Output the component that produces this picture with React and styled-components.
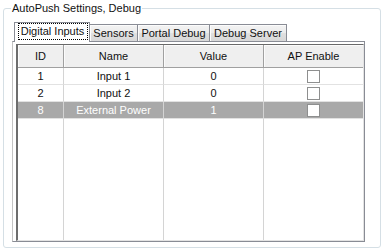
import React from "react";
import styled, { createGlobalStyle } from "styled-components";

const Global = createGlobalStyle`
  html, body { margin: 0; padding: 0; background: #ffffff; }
  body { font-family: "Liberation Sans", Arial, sans-serif; font-size: 11px; color: #111; }
  * { box-sizing: border-box; }
`;

const Page = styled.div`
  width: 392px;
  height: 249px;
  padding: 8px 0 0 3px;
`;

const GroupBox = styled.div`
  position: relative;
  width: 378px;
  height: 240px;
  border: 1px solid #d5dfe5;
  border-radius: 3px;
  padding: 13px 15px 5px 8px;
`;

const GroupTitle = styled.div`
  position: absolute;
  top: -7px;
  left: 7px;
  padding: 0 1px;
  line-height: 13px;
  background: #ffffff;
  color: #111;
  white-space: nowrap;
`;

const TabControl = styled.div`
  display: flex;
  flex-direction: column;
  width: 353px;
  height: 220px;
`;

const TabStrip = styled.div`
  display: flex;
  align-items: flex-end;
  height: 19px;
  padding-left: 2px;
  position: relative;
  z-index: 1;
`;

const Tab = styled.div`
  display: flex;
  align-items: center;
  justify-content: center;
  white-space: nowrap;
  border: 1px solid #898c95;
  border-bottom: none;
  width: ${(p) => p.$w}px;
  margin-left: ${(p) => (p.$first ? 0 : -1)}px;
  height: ${(p) => (p.$active ? 20 : 17)}px;
  margin-bottom: ${(p) => (p.$active ? -1 : 0)}px;
  padding-bottom: ${(p) => (p.$active ? 2 : 0)}px;
  background: ${(p) =>
    p.$active ? "#ffffff" : "linear-gradient(#f3f3f3, #ececec 50%, #e0e0e0 51%, #d8d8d8)"};
  box-shadow: ${(p) => (p.$active ? "none" : "inset 1px 1px 0 #fcfcfc")};
  position: relative;
  z-index: ${(p) => (p.$active ? 2 : 1)};
`;

const FocusLabel = styled.span`
  display: flex;
  align-items: center;
  justify-content: center;
  width: 70px;
  height: 17px;
  margin-left: 1px;
  border: 1px dotted #000;
  line-height: 13px;
`;

const TabPanel = styled.div`
  flex: 1;
  border: 1px solid #898c95;
  border-left-color: #c4c4c4;
  padding: 2px 0 0 3px;
  background: #ffffff;
  display: flex;
`;

const Grid = styled.div`
  flex: 1;
  display: grid;
  grid-template-columns: 46px 100px 100px 1fr;
  grid-template-rows: 23px 17px 17px 17px 1fr;
  border-top: 1px solid #696969;
  border-left: 2px solid #6d6d6d;
  border-right: 1px solid #e3e3e3;
  border-bottom: 1px solid #e3e3e3;
  background: #ffffff;
`;

const HeaderCell = styled.div`
  display: flex;
  align-items: center;
  justify-content: center;
  background: #efefef;
  border-right: ${(p) => (p.$last ? "none" : "1px solid #a0a0a0")};
  border-bottom: 1px solid #a0a0a0;
  box-shadow: inset 1px 1px 0 #fbfbfb;
`;

const Cell = styled.div`
  display: flex;
  align-items: center;
  justify-content: center;
  white-space: nowrap;
  background: ${(p) => (p.$selected ? "#a9a9a9" : "#ffffff")};
  color: ${(p) => (p.$selected ? "#ffffff" : "#111111")};
  border-right: ${(p) => (p.$last ? "none" : "1px solid #d4d4d4")};
  border-bottom: 1px solid #e2e2e2;
`;

const FillerCell = styled.div`
  border-right: ${(p) => (p.$last ? "none" : "1px solid #d4d4d4")};
`;

const CheckBox = styled.div`
  width: 13px;
  height: 13px;
  border: 1px solid #8e8f8f;
  background: #ffffff;
`;

const tabs = [
  { label: "Digital Inputs", w: 76, active: true },
  { label: "Sensors", w: 49 },
  { label: "Portal Debug", w: 73 },
  { label: "Debug Server", w: 78 },
];

const columns = ["ID", "Name", "Value", "AP Enable"];

const rows = [
  { id: "1", name: "Input 1", value: "0" },
  { id: "2", name: "Input 2", value: "0" },
  { id: "8", name: "External Power", value: "1", selected: true },
];

export default function App() {
  return (
    <>
      <Global />
      <Page>
        <GroupBox>
          <GroupTitle>AutoPush Settings, Debug</GroupTitle>
          <TabControl>
            <TabStrip>
              {tabs.map((t, i) => (
                <Tab key={t.label} $w={t.w} $active={t.active} $first={i === 0}>
                  {t.active ? <FocusLabel>{t.label}</FocusLabel> : t.label}
                </Tab>
              ))}
            </TabStrip>
            <TabPanel>
              <Grid>
                {columns.map((c, i) => (
                  <HeaderCell key={c} $last={i === columns.length - 1}>
                    {c}
                  </HeaderCell>
                ))}
                {rows.map((r) => (
                  <React.Fragment key={r.id}>
                    <Cell $selected={r.selected}>{r.id}</Cell>
                    <Cell $selected={r.selected}>{r.name}</Cell>
                    <Cell $selected={r.selected}>{r.value}</Cell>
                    <Cell $selected={r.selected} $last>
                      <CheckBox />
                    </Cell>
                  </React.Fragment>
                ))}
                <FillerCell />
                <FillerCell />
                <FillerCell />
                <FillerCell $last />
              </Grid>
            </TabPanel>
          </TabControl>
        </GroupBox>
      </Page>
    </>
  );
}
